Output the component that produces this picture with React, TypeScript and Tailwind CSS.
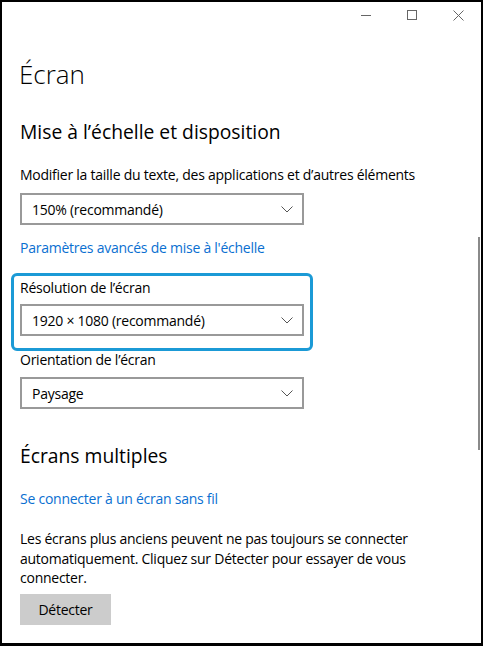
const font = { fontFamily: '"Open Sans", "Noto Sans", sans-serif' };

const Chevron = () => (
  <svg width="12" height="7" viewBox="0 0 12 7" className="shrink-0">
    <path d="M0.5 0.5L6 6L11.5 0.5" fill="none" stroke="#555" strokeWidth="1" />
  </svg>
);

const Select = ({ value }: { value: string }) => (
  <div className="w-[284px] h-[32px] border-2 border-[#999999] bg-white flex items-center justify-between pl-[10px] pr-[9px]">
    <span className="text-[14px] tracking-[-0.25px] text-black">{value}</span>
    <Chevron />
  </div>
);

const TitleBar = () => (
  <div className="h-[26px] flex justify-end shrink-0">
    <button className="w-[46px] flex items-center justify-center">
      <svg width="10" height="10" viewBox="0 0 10 10">
        <path d="M0 5.5h10" stroke="#666" strokeWidth="1" />
      </svg>
    </button>
    <button className="w-[46px] flex items-center justify-center">
      <svg width="10" height="10" viewBox="0 0 10 10">
        <rect x="0.5" y="0.5" width="9" height="9" fill="none" stroke="#666" strokeWidth="1" />
      </svg>
    </button>
    <button className="w-[46px] flex items-center justify-center">
      <svg width="11" height="11" viewBox="0 0 11 11">
        <path d="M0.5 0.5l10 10M10.5 0.5l-10 10" stroke="#666" strokeWidth="1" />
      </svg>
    </button>
  </div>
);

export default function App() {
  return (
    <div
      className="relative w-[483px] h-[646px] bg-white border-black border-l-2 border-r-2 border-t-2 border-b-[3px] overflow-hidden flex flex-col text-black"
      style={font}
    >
      <TitleBar />

      {/* scrollbar */}
      <div className="absolute right-[1px] top-[235px] w-[2px] h-[213px] bg-[#8a8a8a]" />

      <div className="pl-[18px] flex flex-col items-start">
        <h1 className="mt-[29px] -ml-[1px] text-[26px] leading-[34px] font-light">Écran</h1>

        <h2 className="mt-[28px] text-[19.3px] leading-[26px] font-normal">Mise à l’échelle et disposition</h2>

        <p className="mt-[20px] text-[14px] tracking-[-0.25px] leading-[20px]">
          Modifier la taille du texte, des applications et d’autres éléments
        </p>
        <div className="mt-[8px]">
          <Select value="150% (recommandé)" />
        </div>

        <a className="mt-[13px] text-[14px] tracking-[-0.25px] leading-[20px] text-[#0a6fd1]">
          Paramètres avancés de mise à l'échelle
        </a>

        <div className="mt-[15px] -ml-[9px] border-[3px] border-[#1b9ad6] rounded-[6px] pl-[6px] pr-[6px] pt-[2px] pb-[12px]">
          <p className="text-[14px] tracking-[-0.25px] leading-[20px]">Résolution de l’écran</p>
          <div className="mt-[6px]">
            <Select value="1920 × 1080 (recommandé)" />
          </div>
        </div>

        <p className="text-[14px] tracking-[-0.25px] leading-[18px]">Orientation de l’écran</p>
        <div className="mt-[8px]">
          <Select value="Paysage" />
        </div>

        <h2 className="mt-[34px] text-[19.3px] leading-[26px] font-normal">Écrans multiples</h2>

        <a className="mt-[20px] text-[14px] tracking-[-0.25px] leading-[20px] text-[#0a6fd1]">
          Se connecter à un écran sans fil
        </a>

        <p className="mt-[20px] text-[14px] tracking-[-0.25px] leading-[19.5px]">
          Les écrans plus anciens peuvent ne pas toujours se connecter
          <br />
          automatiquement. Cliquez sur Détecter pour essayer de vous
          <br />
          connecter.
        </p>

        <button className="mt-[6px] w-[91px] h-[31px] bg-[#cccccc] text-[14px] tracking-[-0.25px] text-black">
          Détecter
        </button>
      </div>
    </div>
  );
}
